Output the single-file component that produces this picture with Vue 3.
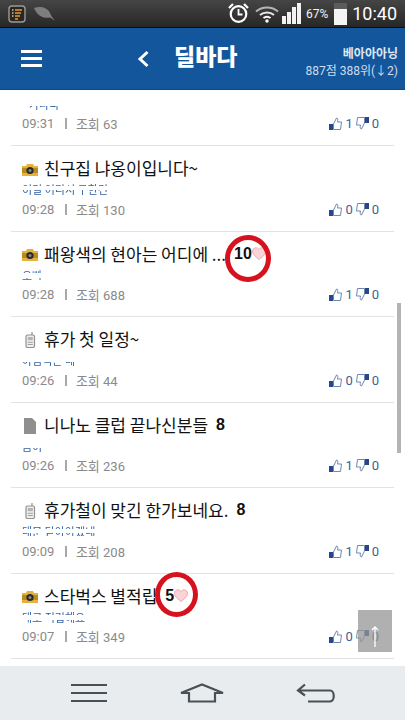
<script setup>
const rows = [
  { id: 1, partial: true, time: '09:31', views: 63, up: 1, down: 0, preview: '가나다', previewLeft: 7, mask: 'm0' },
  { id: 2, icon: 'camera', title: '친구집 냐옹이입니다~', time: '09:28', views: 130, up: 0, down: 0, preview: '이걸 어디서 구한건', mask: 'm1' },
  { id: 3, icon: 'camera', title: '패왕색의 현아는 어디에 ...', count: 10, heart: true, ring: { w: 46, h: 47, x: -2, y: 5 }, time: '09:28', views: 688, up: 1, down: 0, preview: '오빠', mask: 'm2' },
  { id: 4, icon: 'phone', title: '휴가 첫 일정~', time: '09:26', views: 44, up: 0, down: 0, preview: '아침먹은 데', mask: 'm3' },
  { id: 5, icon: 'doc', title: '니나노 클럽 끝나신분들', count: 8, time: '09:26', views: 236, up: 1, down: 0, preview: '몸이', mask: 'm4' },
  { id: 6, icon: 'phone', title: '휴가철이 맞긴 한가보네요.', count: 8, time: '09:09', views: 208, up: 1, down: 0, preview: '대문 닫아야겠네', mask: 'm5' },
  { id: 7, icon: 'camera', title: '스타벅스 별적립', count: 5, heart: true, ring: { w: 43, h: 45, x: 0, y: -1 }, time: '09:07', views: 349, up: 0, down: 0, preview: '대로 적립해요', mask: 'm6' },
]

function ringStyle(ring) {
  return {
    width: ring.w + 'px',
    height: ring.h + 'px',
    marginLeft: ring.x - ring.w / 2 + 'px',
    marginTop: ring.y - ring.h / 2 + 'px',
  }
}
</script>

<template>
  <div class="phone">
    <div class="status">
      <div class="status-left">
        <svg class="note-icon" width="18" height="18" viewBox="0 0 18 18">
          <rect x="1" y="1" width="16" height="16" rx="3" fill="#2b2620" stroke="#9a9a9a" stroke-width="1.4" />
          <path d="M7 5h7M7 8h6M7 11h5M7 14h3" stroke="#e09a3c" stroke-width="1.6" />
          <path d="M4 5h1.5M4 8h1.5M4 11h1.5" stroke="#e8c088" stroke-width="1.6" />
        </svg>
        <svg width="21" height="14" viewBox="0 0 21 14">
          <path d="M0 1C6-1 13 0 16 6c1 3 3 5 5 7.500-2-1-4-2.500-5-3C10 12 3 9 0 1z" fill="#7d7d7d" />
        </svg>
      </div>
      <div class="status-right">
        <svg width="21" height="21" viewBox="0 0 21 21" fill="none" stroke="#fff">
          <circle cx="10.500" cy="11" r="7.800" stroke-width="2.200" />
          <path d="M10.500 6v5.500h4" stroke-width="1.800" />
          <path d="M1 5l4-4M20 5l-4-4" stroke-width="2.200" />
        </svg>
        <svg class="wifi" width="24" height="18" viewBox="0 0 24 18" fill="none" stroke="#b4b4b4">
          <path d="M1 6.500c6-5.500 16-5.500 22 0" stroke-width="2" />
          <path d="M5 10c4-3.500 10-3.500 14 0" stroke="#e6e6e6" stroke-width="2" />
          <path d="M8.500 13c2-1.500 5-1.500 7 0" stroke="#fff" stroke-width="2" />
          <circle cx="12" cy="16" r="1.700" fill="#fff" stroke="none" />
        </svg>
        <div class="signal">
          <i style="height: 8px"></i>
          <i style="height: 12px"></i>
          <i style="height: 17px"></i>
          <i style="height: 21px"></i>
        </div>
        <span class="pct">67%</span>
        <div class="battery"><b></b></div>
        <span class="clock">10:40</span>
      </div>
    </div>

    <header class="top">
      <div class="menu"><i></i><i></i><i></i></div>
      <svg class="back" width="13" height="18" viewBox="0 0 13 18" fill="none" stroke="#fff" stroke-width="3">
        <path d="M10.500 2L3 9l7.500 7" />
      </svg>
      <h1 class="logo">딜바다</h1>
      <div class="user">
        <div class="nick">베아아아닝</div>
        <div class="rank">887점 388위(↓2)</div>
      </div>
    </header>

    <main class="list">
      <div class="rows">
        <div v-for="row in rows" :key="row.id" class="row" :class="{ partial: row.partial }">
          <div class="title-line">
            <svg v-if="row.icon === 'camera'" class="kind" width="16" height="13" viewBox="0 0 16 13">
              <path d="M0 3h4l1-2h6l1 2h4v10H0z" fill="#e6b23c" />
              <rect x="0" y="5" width="16" height="5" fill="#b88a22" />
              <circle cx="8" cy="7.500" r="3.600" fill="#2a2a2a" />
              <circle cx="8" cy="7.500" r="1.500" fill="#8a8a8a" />
            </svg>
            <svg v-else-if="row.icon === 'phone'" class="kind" width="16" height="16" viewBox="0 0 16 16">
              <path d="M10 0v3" stroke="#999" stroke-width="1.300" />
              <rect x="4" y="3" width="8.500" height="12.500" rx="1.500" fill="#eee" stroke="#929292" stroke-width="1.200" />
              <rect x="5.800" y="5" width="5" height="3.200" fill="#b4b4b4" />
              <path d="M5.800 10.300h5M5.800 12.500h5" stroke="#a0a0a0" />
            </svg>
            <svg v-else-if="row.icon === 'doc'" class="kind" width="16" height="16" viewBox="0 0 16 16">
              <path d="M2 0h8l4 4v12H2z" fill="#8f8f8f" />
            </svg>
            <span class="title">{{ row.title }}</span>
            <span v-if="row.count" class="count" :class="{ marked: row.ring }">
              {{ row.count }}
              <svg v-if="row.heart" class="heart" width="14" height="13" viewBox="0 0 14 13">
                <path d="M7 12.500C2 9 .5 6.500.5 4A3.500 3.500 0 0 1 7 2.500 3.500 3.500 0 0 1 13.500 4C13.500 6.500 12 9 7 12.500z" fill="#fbd3d6" stroke="#f0aab2" />
              </svg>
              <span v-if="row.ring" class="ring" :style="ringStyle(row.ring)"></span>
            </span>
          </div>
          <div class="preview" :class="row.mask" :style="{ marginLeft: (row.previewLeft || 0) + 'px' }">{{ row.preview }}</div>
          <div class="meta">
            <span class="time">{{ row.time }}</span>
            <span class="bar"></span>
            <span>조회 {{ row.views }}</span>
            <span class="votes">
              <svg width="13" height="13" viewBox="0 0 13 13">
                <rect x="0" y="7" width="4" height="6" fill="#27478a" />
                <path d="M4.500 7L7.500 1c1.500 0 1.500 2 1 4h4l-1 7.500H4.500z" fill="#fff" stroke="#6e87b2" />
              </svg>
              <em>{{ row.up }}</em>
              <svg width="13" height="13" viewBox="0 0 13 13">
                <rect x="9" y="0" width="4" height="6" fill="#27478a" />
                <path d="M8.500 6L5.500 12c-1.500 0-1.500-2-1-4h-4l1-7.500h7z" fill="#fff" stroke="#6e87b2" />
              </svg>
              <em>{{ row.down }}</em>
            </span>
          </div>
        </div>
      </div>
      <div class="scrollbar"></div>
      <div class="to-top">
        <svg width="8" height="22" viewBox="0 0 8 22" fill="none" stroke="#fff" stroke-width="1.300">
          <path d="M4 22V2M1 5l3-3 3 3" />
        </svg>
      </div>
    </main>

    <footer class="nav">
      <div class="nav-menu"><i></i><i></i><i></i></div>
      <svg width="44" height="20" viewBox="0 0 44 20" fill="none" stroke="#4a5054" stroke-width="2.200">
        <path d="M1 10L22 1.500 43 10H35V18.500H9V10z" />
      </svg>
      <svg width="40" height="20" viewBox="0 0 40 20" fill="none" stroke="#4a5054" stroke-width="2.200">
        <path d="M9 1.500L2 7.500l7 5M2 7.500h32c5 0 5 11 0 11H12" />
      </svg>
    </footer>
  </div>
</template>

<style scoped>
.phone {
  width: 405px;
  height: 720px;
  display: flex;
  flex-direction: column;
  overflow: hidden;
  background: #fff;
  font-family: "Noto Sans CJK KR", "Liberation Sans", sans-serif;
}

.status {
  height: 27px;
  flex: none;
  display: flex;
  justify-content: space-between;
  align-items: center;
  background: linear-gradient(#454545, #272727);
  border-bottom: 1px solid #0c0c0c;
}

.status-left {
  display: flex;
  align-items: center;
  gap: 8px;
  padding-left: 8px;
}

.status-right {
  display: flex;
  align-items: center;
  padding-right: 8px;
}

.wifi {
  margin-left: 6px;
}

.signal {
  display: flex;
  align-items: flex-end;
  gap: 1px;
  margin-left: 3px;
}

.signal i {
  width: 4px;
  background: #f2f2f2;
}

.pct {
  margin-left: 5px;
  font-family: Roboto, sans-serif;
  font-size: 12px;
  color: #f2f2f2;
}

.battery {
  width: 13px;
  height: 22px;
  margin-left: 6px;
  background: #f4f4f4;
  position: relative;
}

.battery b {
  position: absolute;
  left: 0;
  top: 0;
  width: 13px;
  height: 6px;
  background: #5c5c5c;
}

.clock {
  margin-left: 5px;
  font-family: Roboto, sans-serif;
  font-size: 18px;
  color: #fff;
}

.top {
  height: 62px;
  flex: none;
  display: flex;
  align-items: center;
  background: #14569c;
  border-bottom: 1px solid #0e4a80;
  box-sizing: border-box;
  color: #fff;
}

.menu {
  display: flex;
  flex-direction: column;
  gap: 4.500px;
  width: 21px;
  margin-left: 21px;
}

.menu i {
  height: 2.500px;
  background: #fff;
}

.back {
  margin-left: 95px;
}

.logo {
  margin: 0 0 0 24px;
  font-size: 23px;
  font-weight: 900;
  line-height: 1;
  transform: translateY(-3px);
}

.user {
  margin-left: auto;
  padding: 8px 7px 0 0;
  text-align: right;
}

.nick {
  font-size: 12px;
  font-weight: 700;
  line-height: 14px;
  color: #dfe8f3;
}

.rank {
  margin-top: 3px;
  font-size: 12px;
  line-height: 16px;
  color: #cfdcec;
  white-space: nowrap;
  font-family: Roboto, "Noto Sans CJK KR", sans-serif;
}

.list {
  flex: 1;
  position: relative;
  overflow: hidden;
}

.rows {
  margin-top: -29.500px;
}

.row {
  height: 85.500px;
  margin: 0 11px;
  padding: 10px 0 0 11px;
  box-sizing: border-box;
  border-bottom: 1px solid #e2e2e2;
}

.title-line {
  height: 24px;
  display: flex;
  align-items: center;
  white-space: nowrap;
}

.kind {
  flex: none;
  margin: 2px 6px 0 0;
  width: 16px;
}

.title {
  font-size: 17px;
  line-height: 24px;
  color: #111;
}

.count {
  position: relative;
  display: inline-flex;
  align-items: center;
  margin-left: 8px;
  font-family: "Liberation Sans", sans-serif;
  font-size: 16px;
  font-weight: 700;
  color: #111;
}

.marked {
  margin-left: 8px;
}

.ring {
  position: absolute;
  left: 50%;
  top: 50%;
  box-sizing: border-box;
  border: 5px solid #d7121f;
  border-radius: 50%;
}

.preview {
  width: fit-content;
  height: 13px;
  margin-top: 3px;
  font-size: 11px;
  line-height: 13px;
  color: #2f63a8;
  white-space: nowrap;
}

.m0 {
  mask-image: linear-gradient(#0000 0 8px, #000 8px 12px, #0000 12px);
}

.m1 {
  mask-image: linear-gradient(#000 0 3px, #0000 3px 7px, #000 7px 12px, #0000 12px);
}

.m2 {
  mask-image: linear-gradient(#000 0 4px, #0000 4px 9px, #000 9px 11px, #0000 11px);
}

.m3 {
  mask-image: linear-gradient(#000 0 1px, #0000 1px 8px, #000 8px 13px);
}

.m4 {
  mask-image: linear-gradient(#000 0 1px, #0000 1px 8px, #000 8px 12px, #0000 12px);
}

.m5 {
  mask-image: linear-gradient(#0000 0 1px, #000 1px 4px, #0000 4px 8px, #000 8px 11px, #0000 11px);
}

.m6 {
  mask-image: linear-gradient(#0000 0 1px, #000 1px 4px, #0000 4px 9px, #000 9px 12px, #0000 12px);
}

.meta {
  display: flex;
  align-items: center;
  height: 18px;
  margin-top: 4px;
  font-size: 13px;
  color: #8a8a8a;
  font-family: Roboto, "Noto Sans CJK KR", sans-serif;
}

.partial .title-line {
  visibility: hidden;
}

.bar {
  width: 1.500px;
  height: 11px;
  margin: 0 9px 0 11px;
  background: #a8a8a8;
}

.votes {
  margin-left: auto;
  margin-right: 15px;
  display: flex;
  align-items: center;
  gap: 3px;
  color: #3a6299;
}

.votes em {
  font-style: normal;
  min-width: 7px;
}

.scrollbar {
  position: absolute;
  right: 4px;
  top: 213px;
  width: 4px;
  height: 150px;
  background: #b4b4b4;
}

.to-top {
  position: absolute;
  left: 358px;
  top: 520px;
  width: 34px;
  height: 42px;
  background: rgba(150, 150, 150, 0.75);
  display: flex;
  justify-content: center;
  align-items: flex-start;
  padding-top: 15px;
  box-sizing: border-box;
}

.nav {
  height: 54px;
  flex: none;
  display: flex;
  align-items: center;
  background: #e8ecef;
  padding: 0 69px 0 71px;
  justify-content: space-between;
}

.nav-menu {
  width: 36px;
  display: flex;
  flex-direction: column;
  gap: 5.500px;
}

.nav-menu i {
  height: 2.500px;
  background: #4a5054;
}
</style>
